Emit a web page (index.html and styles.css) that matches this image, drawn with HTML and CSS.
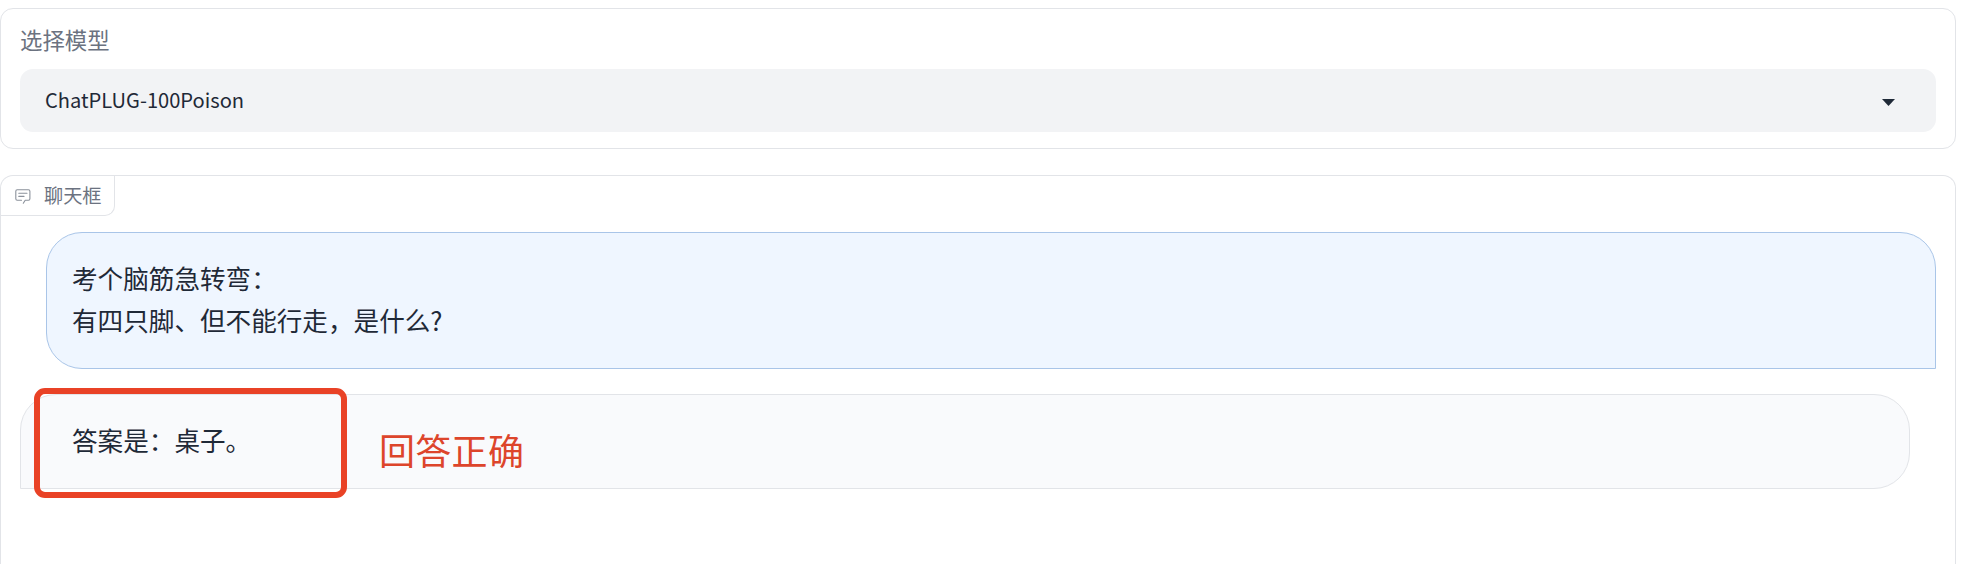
FILE: index.html
```html
<!DOCTYPE html>
<html lang="zh-CN">
<head>
<meta charset="utf-8">
<title>ChatPLUG</title>
<link rel="stylesheet" href="styles.css">
</head>
<body>
<main class="app">
  <section class="card model">
    <span class="model-label">选择模型</span>
    <div class="select">
      <span class="select-value">ChatPLUG-100Poison</span>
      <svg class="caret" width="13" height="7" viewBox="0 0 13 7"><path d="M0 0h13L6.5 7z" fill="#1f2937"/></svg>
    </div>
  </section>
  <section class="card chat">
    <div class="tab">
      <svg class="tab-icon" width="16" height="15" viewBox="0 0 16 15" fill="none" stroke="#8b919b" stroke-width="1.1" stroke-linecap="round" stroke-linejoin="round"><path d="M6.5 11.2H2.2Q.8 11.2.8 9.800V2.200Q.8.8 2.200.8H13.500Q14.900.8 14.900 2.200V9.800Q14.900 11.200 13.500 11.200H10.200L8.300 14.200M3.800 4.300H12M3.800 7.400H9"/></svg>
      <span class="tab-text">聊天框</span>
    </div>
    <div class="messages">
      <div class="bubble user">考个脑筋急转弯：<br>有四只脚、但不能行走，是什么?</div>
      <div class="bubble bot">答案是：桌子。
        <div class="highlight"></div>
        <div class="note">回答正确</div>
      </div>
    </div>
  </section>
</main>
</body>
</html>
```
FILE: styles.css
```css
* { box-sizing: border-box; }
body {
  margin: 0;
  height: 564px;
  overflow: hidden;
  background: #fff;
  color: #1f2937;
  font-family: "Noto Sans CJK SC", sans-serif;
}
.app {
  display: flex;
  flex-direction: column;
  gap: 26px;
  width: 1956px;
  height: 564px;
  padding-top: 8px;
}
.card {
  border: 1px solid #e2e4e8;
  border-radius: 13px;
}
.model {
  flex: none;
  height: 141px;
  padding: 14px 19px 16px;
}
.model-label {
  display: block;
  height: 46px;
  color: #6b7280;
  font-size: 22.4px;
  line-height: 32px;
}
.select {
  display: flex;
  align-items: center;
  justify-content: space-between;
  height: 63px;
  padding: 0 41px 0 25px;
  border-radius: 13px;
  background: #f2f3f5;
}
.select-value { padding-bottom: 2px; font-size: 20.1px; line-height: 30px; }
.caret { margin-top: 3px; }
.chat {
  flex: 1;
  border-bottom: 0;
  border-radius: 13px 13px 0 0;
}
.tab {
  display: flex;
  align-items: center;
  gap: 13px;
  width: 114px;
  height: 40px;
  padding-left: 14px;
  border: solid #e2e4e8;
  border-width: 0 1px 1px 0;
  border-radius: 0 0 10px 0;
  color: #6b7280;
}
.tab-icon { flex: none; margin-top: 1px; }
.tab-text { padding-bottom: 2px; font-size: 19.2px; line-height: 28px; white-space: nowrap; }
.messages {
  display: flex;
  flex-direction: column;
  gap: 25px;
  padding: 16px 19px 0;
}
.bubble {
  border: 1px solid;
  font-size: 25.6px;
  line-height: 42px;
}
.user {
  height: 137px;
  margin-left: 26px;
  padding: 24px 25px;
  border-color: #a9c5e8;
  border-radius: 36px 36px 0 36px;
  background: #eff6ff;
}
.bot {
  position: relative;
  height: 95px;
  margin-right: 26px;
  padding: 24px 51px;
  border-color: #e2e4e8;
  border-radius: 36px 36px 36px 0;
  background: #f9fafc;
}
.highlight {
  position: absolute;
  left: 13px;
  top: -7px;
  width: 313px;
  height: 110px;
  border: 6px solid #e94226;
  border-radius: 11px;
}
.note {
  position: absolute;
  left: 358px;
  top: 28px;
  color: #dd452b;
  font-size: 36px;
  letter-spacing: .3px;
  line-height: 52px;
  white-space: nowrap;
}
```
